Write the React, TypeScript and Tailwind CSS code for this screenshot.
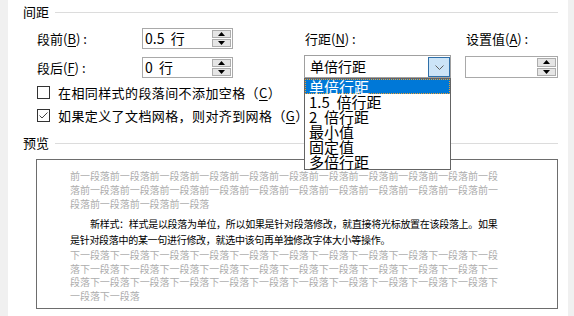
import React from "react";

const cjk = "font-['Noto_Sans_CJK_SC','Noto_Sans',sans-serif]";

function Arrow({ up }: { up?: boolean }) {
  return (
    <div className="flex flex-1 items-center justify-center border border-[#adadad] bg-[#e5e5e5]">
      <svg width="7" height="4" viewBox="0 0 7 4">
        {up ? <polygon points="0,4 7,4 3.5,0" fill="#000" /> : <polygon points="0,0 7,0 3.5,4" fill="#000" />}
      </svg>
    </div>
  );
}

function Spinner({ value, className }: { value: string; className: string }) {
  return (
    <div className={`flex items-stretch border border-[#a9a9a9] bg-white ${className}`}>
      <div className="flex-1 whitespace-pre pl-[2px] text-[14px] leading-[19px] text-black">{value}</div>
      <div className="flex w-[20px] flex-col gap-px py-px pr-px">
        <Arrow up />
        <Arrow />
      </div>
    </div>
  );
}

function Key({ k }: { k: string }) {
  return <span className="underline underline-offset-2">{k}</span>;
}

function Header({ title }: { title: string }) {
  return (
    <div className="flex h-[16px] items-center">
      <span className="text-[13px] leading-[16px]">{title}</span>
      <div className="ml-[6px] h-px flex-1 bg-[#dcdcdc]" />
    </div>
  );
}

function Check({ checked, children }: { checked?: boolean; children: React.ReactNode }) {
  return (
    <div className="flex h-[23px] items-center">
      <div className="flex h-[13px] w-[13px] items-center justify-center border border-[#333] bg-white">
        {checked && (
          <svg width="11" height="11" viewBox="0 0 11 11">
            <path d="M1.5 5.5 L4 8 L9.5 2.5" fill="none" stroke="#444" strokeWidth="1" />
          </svg>
        )}
      </div>
      <span className="ml-[8px] whitespace-nowrap text-[13px] leading-[16px] tracking-[0.4px]">{children}</span>
    </div>
  );
}

const prev = "前一段落".repeat(25);
const next = "下一段落".repeat(34);
const prevLines = [prev.slice(0, 43), prev.slice(43, 86), prev.slice(86)];
const nextLines = [next.slice(0, 43), next.slice(43, 86), next.slice(86, 129), next.slice(129)];

const items = ["单倍行距", "1.5  倍行距", "2  倍行距", "最小值", "固定值", "多倍行距"];

export default function App() {
  return (
    <div className={`flex h-[316px] w-[574px] overflow-hidden bg-white text-black ${cjk}`}>
      <div className="w-[8px] shrink-0 bg-[#f0f0f0]" />
      <div className="relative flex-1 pl-[15px] pr-[10px] pt-[4px]">
        <Header title="间距" />

        <div className="mt-[8px] flex">
          {/* 段前 / 段后 */}
          <div className="ml-[14px] flex flex-col gap-[8px]">
            <div className="flex h-[21px] items-center">
              <span className="w-[105px] text-[13px]">
                段前(<Key k="B" />) :
              </span>
              <Spinner value="0.5  行" className="h-[21px] w-[91px]" />
            </div>
            <div className="flex h-[21px] items-center">
              <span className="w-[105px] text-[13px]">
                段后(<Key k="F" />) :
              </span>
              <Spinner value="0  行" className="h-[21px] w-[91px]" />
            </div>
          </div>

          {/* 行距 */}
          <div className="ml-[71px] flex flex-col">
            <div className="flex h-[21px] items-center pl-px text-[13px]">
              行距(<Key k="N" />) :
            </div>
            <div className="mt-[6px] flex h-[23px] w-[147px] border border-[#a0a0a0] bg-white">
              <div className="flex-1 pl-[5px] text-[14px] leading-[21px]">单倍行距</div>
              <div className="mt-px flex w-[22px] items-center justify-center border border-[#2f6fa8] bg-[#cce4f7]">
                <svg width="9" height="5" viewBox="0 0 9 5">
                  <path d="M0.5 0.5 L4.5 4.5 L8.5 0.5" fill="none" stroke="#606060" strokeWidth="1" />
                </svg>
              </div>
            </div>
          </div>

          {/* 设置值 */}
          <div className="ml-[14px] flex flex-col">
            <div className="flex h-[21px] items-center pl-px text-[13px]">
              设置值(<Key k="A" />) :
            </div>
            <Spinner value="" className="mt-[7px] h-[22px] w-[93px]" />
          </div>
        </div>

        <div className="ml-[14px] mt-[3px] flex flex-col">
          <Check>在相同样式的段落间不添加空格（<Key k="C" />）</Check>
          <Check checked>如果定义了文档网格，则对齐到网格（<Key k="G" />）</Check>
        </div>

        <div className="mt-[8px]">
          <Header title="预览" />
        </div>

        <div className="ml-[13px] mt-[8px] h-[150px] border border-[#6d6d6d] bg-white pl-[33px] pt-[9px]">
          <div className="text-[10px] leading-[14px] tracking-[-0.05px] text-[#adadad]">
            {prevLines.map((l, i) => (
              <div key={i} className="whitespace-nowrap">{l}</div>
            ))}
          </div>
          <div className="mt-[5px] text-[10px] leading-[16px] tracking-[-0.3px] text-black">
            <div className="whitespace-nowrap pl-[20px]">
              新样式：样式是以段落为单位，所以如果是针对段落修改，就直接将光标放置在该段落上。如果
            </div>
            <div className="whitespace-nowrap">是针对段落中的某一句进行修改，就选中该句再单独修改字体大小等操作。</div>
          </div>
          <div className="text-[10px] leading-[13.5px] tracking-[-0.05px] text-[#adadad]">
            {nextLines.map((l, i) => (
              <div key={i} className="whitespace-nowrap">{l}</div>
            ))}
          </div>
        </div>

        {/* open dropdown list */}
        <div className="absolute left-[296px] top-[78px] w-[147px] border border-[#646464] bg-white">
          {items.map((t, i) => (
            <div
              key={t}
              className={
                i === 0
                  ? "h-[15px] whitespace-pre border border-dotted border-[#f0a030] bg-[#0078d7] pl-[3px] text-[15px] leading-[13px] text-white"
                  : "h-[15px] whitespace-pre pl-[4px] text-[15px] leading-[15px] text-black"
              }
            >
              {t}
            </div>
          ))}
        </div>
      </div>
      <div className="w-[6px] shrink-0 bg-[#f0f0f0]" />
    </div>
  );
}
